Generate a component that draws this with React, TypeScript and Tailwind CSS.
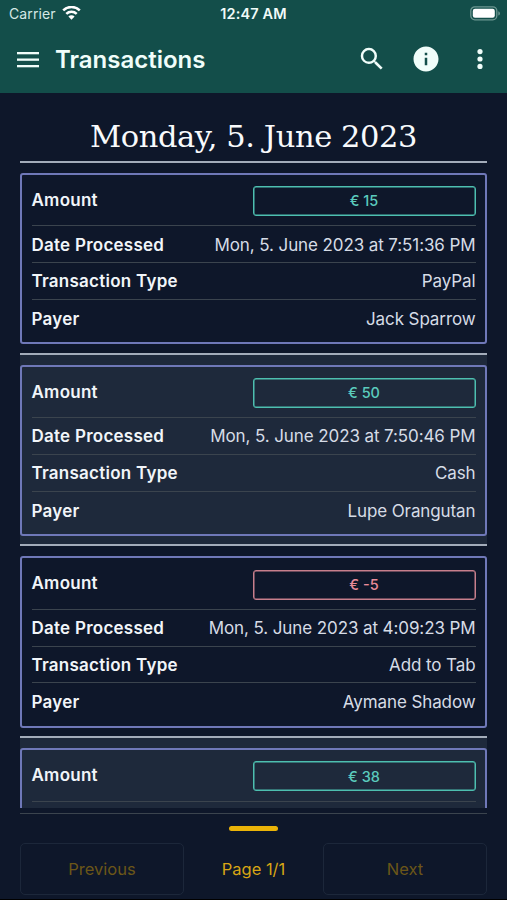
import clsx from "clsx";

type Transaction = {
  amount: number;
  date: string;
  type: string;
  payer: string;
};

const transactions: Transaction[] = [
  { amount: 15, date: "Mon, 5. June 2023 at 7:51:36 PM", type: "PayPal", payer: "Jack Sparrow" },
  { amount: 50, date: "Mon, 5. June 2023 at 7:50:46 PM", type: "Cash", payer: "Lupe Orangutan" },
  { amount: -5, date: "Mon, 5. June 2023 at 4:09:23 PM", type: "Add to Tab", payer: "Aymane Shadow" },
  { amount: 38, date: "", type: "", payer: "" },
];

function StatusBar() {
  return (
    <div className="flex h-[27px] items-center px-[9px] text-[14px]">
      <div className="flex flex-1 items-center gap-[6px]">
        <span className="tracking-[0.1px] text-[#d5e8e5]">Carrier</span>
        <svg width="19" height="15" viewBox="0 0 19 15" fill="none" stroke="white" strokeWidth="2.5">
          <path d="M1.2 4.4a11.8 11.8 0 0 1 16.6 0" />
          <path d="M4.3 7.9a7.4 7.4 0 0 1 10.4 0" />
          <path d="M9.5 13.8 6.4 10.6a4.4 4.4 0 0 1 6.2 0z" fill="white" stroke="none" />
        </svg>
      </div>
      <span className="text-[14.5px] font-semibold tracking-[0.15px] text-[#f0fbf9]">12:47 AM</span>
      <div className="flex flex-1 justify-end">
        <svg width="31" height="15" viewBox="0 0 31 15" className="-mr-[3px]">
          <rect x="0.8" y="0.8" width="26" height="13" rx="4" fill="none" stroke="#6d9791" strokeWidth="1.3" />
          <rect x="2.8" y="2.8" width="22" height="9" rx="2.2" fill="white" />
          <path d="M28.3 5.2a2.3 2.3 0 0 1 0 4.4z" fill="#6d9791" />
        </svg>
      </div>
    </div>
  );
}

function Header() {
  return (
    <header className="h-[92.5px] shrink-0 bg-[#134e4a]">
      <StatusBar />
      <div className="flex h-[65px] items-center pr-[13px] pl-[17px] text-[#f0fdfa]">
        <svg width="22" height="16" viewBox="0 0 22 16" fill="currentColor">
          <rect y="0" width="22" height="2.3" />
          <rect y="6.5" width="22" height="2.3" />
          <rect y="13" width="22" height="2.3" />
        </svg>
        <h1 className="ml-4 flex-1 text-[24px] font-semibold">Transactions</h1>
        <svg width="30" height="30" viewBox="0 0 24 24" fill="currentColor" className="relative -top-px">
          <path d="M15.5 14h-.79l-.28-.27A6.471 6.471 0 0 0 16 9.5 6.5 6.5 0 1 0 9.5 16c1.61 0 3.09-.59 4.23-1.57l.27.28v.79l5 4.99L20.49 19l-4.99-5zm-6 0C7.01 14 5 11.99 5 9.5S7.01 5 9.5 5 14 7.01 14 9.5 11.99 14 9.5 14z" />
        </svg>
        <svg className="relative -top-px ml-6" width="30" height="30" viewBox="0 0 24 24" fill="currentColor">
          <path d="M12 2C6.48 2 2 6.48 2 12s4.48 10 10 10 10-4.48 10-10S17.52 2 12 2zm1 15h-2v-6h2v6zm0-8h-2V7h2v2z" />
        </svg>
        <svg className="relative -top-px ml-[25px]" width="28" height="28" viewBox="0 0 28 28" fill="currentColor">
          <circle cx="14" cy="6.6" r="2.6" />
          <circle cx="14" cy="14" r="2.6" />
          <circle cx="14" cy="21.4" r="2.6" />
        </svg>
      </div>
    </header>
  );
}

function Row({ label, value, last }: { label: string; value: string; last?: boolean }) {
  return (
    <div className={clsx("flex h-[36.8px] items-center justify-between pt-[2.5px]", !last && "border-b border-[#3b444e]")}>
      <span className="text-[17px] font-semibold tracking-[0.25px] text-[#f1f5f9]">{label}</span>
      <span className="text-[17px] tracking-[-0.1px] text-[#d6dce6]">{value}</span>
    </div>
  );
}

function TransactionCard({ tx, striped }: { tx: Transaction; striped: boolean }) {
  return (
    <div className={clsx("h-[191.8px] shrink-0 border-b-2 border-[#a3acba] pt-[10px]", striped && "bg-[#1e293b]")}>
      <div className="h-[171.5px] rounded-[3px] border-2 border-[#6f78b8] px-[9.5px]">
        <div className="flex h-[51.5px] items-center justify-between border-b border-[#3b444e] pt-[2px]">
          <span className="-mt-px text-[17px] font-semibold tracking-[0.25px] text-[#f1f5f9]">Amount</span>
          <span
            className={clsx(
              "flex h-[30px] w-[223px] items-center justify-center rounded-[3px] border text-[14.5px] font-medium shadow-[inset_0_0_0_0.5px]",
              tx.amount < 0
                ? "border-[#c77f8c] text-[#e88b99] shadow-[#c77f8c]"
                : "border-[#4dbfb0] text-[#5bcbbd] shadow-[#4dbfb0]",
            )}
          >
            € {tx.amount}
          </span>
        </div>
        {tx.date && (
          <>
            <Row label="Date Processed" value={tx.date} />
            <Row label="Transaction Type" value={tx.type} />
            <Row label="Payer" value={tx.payer} last />
          </>
        )}
      </div>
    </div>
  );
}

function Pagination() {
  return (
    <footer className="mx-5 mt-[5px] border-t border-[#3b444e] pt-[12px] text-[17px]">
      <div className="mx-auto h-[5px] w-[49px] rounded-full bg-[#eab308]" />
      <div className="mt-3 flex items-center justify-between">
        <button className="h-[52px] w-[164px] rounded-[5px] border border-[#1c273a] pt-[2px] text-[16.5px] text-[#6b5618]">
          Previous
        </button>
        <span className="pt-[2px] text-[16.5px] text-[#d8a514]">Page 1/1</span>
        <button className="h-[52px] w-[164px] rounded-[5px] border border-[#1c273a] pt-[2px] text-[16.5px] text-[#6b5618]">
          Next
        </button>
      </div>
    </footer>
  );
}

export default function App() {
  return (
    <div className="flex h-[900px] w-[507px] flex-col overflow-hidden border-b border-black bg-[#0e172a] font-['Inter','Liberation_Sans',sans-serif]">
      <Header />
      <main className="mx-5 flex h-[715px] shrink-0 flex-col overflow-hidden">
        <h2 className="flex h-[70.3px] shrink-0 items-center justify-center border-b-2 border-[#a3acba] pt-[20px] font-['DejaVu_Serif',serif] text-[30.5px] tracking-[-0.4px] whitespace-nowrap text-[#f8fafc]">
          Monday, 5. June 2023
        </h2>
        {transactions.map((tx, i) => (
          <TransactionCard key={i} tx={tx} striped={i % 2 === 1} />
        ))}
      </main>
      <Pagination />
    </div>
  );
}
